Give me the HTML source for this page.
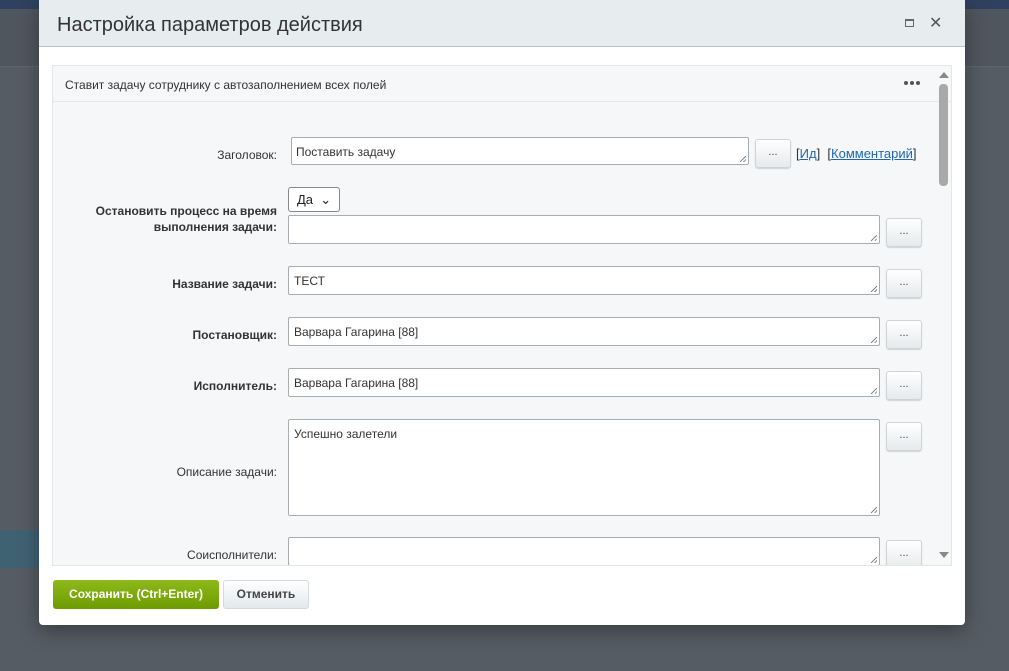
<!DOCTYPE html>
<html><head><meta charset="utf-8"><style>
*{box-sizing:border-box}
body{margin:0;width:1009px;height:671px;overflow:hidden;background:#565c64;font-family:"Liberation Sans","DejaVu Sans",sans-serif;position:relative}
.topbar{position:absolute;left:0;top:0;width:1009px;height:9px;background:#2f4160}
.sub{position:absolute;left:0;top:9px;width:1009px;height:58px;background:#50565e;border-bottom:1px solid #5f656c}
.teal{position:absolute;left:0;top:530px;width:40px;height:38px;background:#3f6273}
.dlg{position:absolute;left:39px;top:0;width:926px;height:625px;background:#fff;border-radius:0 0 4px 4px;box-shadow:0 6px 20px rgba(0,0,0,.35)}
.hd{height:47px;background:#e7ecef;border-bottom:1px solid #b9bfc4;position:relative}
.hd .t{position:absolute;left:18px;top:14px;font-size:20px;color:#333}
.hd .mx{position:absolute;left:866px;top:19px;width:9px;height:8px;border:1px solid #666;border-top-width:2px}
.hd .cl{position:absolute;left:890px;top:13px;font-size:16px;color:#555}
.pn{position:absolute;left:13px;top:65px;width:900px;height:501px;background:#f5f7f8;border:1px solid #e2e6e9;overflow:hidden}
.ph{height:36px;border-bottom:1px solid #e3e7ea;font-size:12px;color:#333;padding:12px 0 0 12px;position:relative}
.ph .dots{position:absolute;left:851px;top:15px;height:4px;line-height:0}
.ph .dots i{display:inline-block;width:4px;height:4px;border-radius:2px;background:#555;margin-right:2px;vertical-align:top}
.sb{position:absolute;left:886px;top:18px;width:9px;height:102px;background:#a9a9a9;border-radius:4px}
.ar{position:absolute;left:886px;width:0;height:0;border-left:5px solid transparent;border-right:5px solid transparent}
.lbl{position:absolute;right:674px;font-size:12px;color:#333;text-align:right;line-height:16px}
.b{font-weight:bold}
.ta{position:absolute;background:#fff;border:1px solid #a8adb2;border-radius:2px;font-size:12px;color:#333;padding:7px 5px}
.ta:after{content:"";position:absolute;right:2px;bottom:2px;width:6px;height:6px;background:linear-gradient(135deg,transparent 45%,#888 45%,#888 55%,transparent 55%,transparent 75%,#888 75%,#888 85%,transparent 85%)}
.btn{position:absolute;width:36px;height:29px;border:1px solid #d0d4d7;border-radius:3px;background:linear-gradient(#fff,#e6eaec);font-size:11px;text-align:center;line-height:25px;color:#444;box-shadow:0 1px 1px rgba(0,0,0,.15)}
.sel{position:absolute;left:235px;top:121px;width:52px;height:25px;border:1px solid #888;border-radius:3px;background:#fff;font-size:13px;padding:4px 0 0 8px;color:#222}
a{color:#2067b0}
.save{position:absolute;left:14px;top:580px;width:166px;height:29px;background:linear-gradient(#8fb81b,#6d9c00);border-radius:3px;color:#fff;font-weight:bold;font-size:12px;text-align:center;line-height:29px}
.cancel{position:absolute;left:184px;top:580px;width:86px;height:29px;background:linear-gradient(#fff,#e4e9ec);border:1px solid #d6dadd;border-radius:3px;color:#444;font-weight:bold;font-size:12px;text-align:center;line-height:27px}
</style></head><body>
<div class="topbar"></div><div class="sub"></div><div class="teal"></div>
<div class="dlg">
<div class="hd"><div class="t">Настройка параметров действия</div><div class="mx"></div><div class="cl">✕</div></div>
<div class="pn">
<div class="ph">Ставит задачу сотруднику с автозаполнением всех полей<span class="dots"><i></i><i></i><i></i></span></div>
<div class="ar" style="top:6px;border-bottom:6px solid #888"></div>
<div class="sb"></div>
<div class="ar" style="top:486px;border-top:6px solid #888"></div>

<div class="lbl" style="top:81px">Заголовок:</div>
<div class="ta" style="left:238px;top:71px;width:458px;height:28px;padding-left:4px">Поставить задачу</div>
<div class="btn" style="left:702px;top:73px">...</div>
<div style="position:absolute;left:743px;top:80px;font-size:13px;color:#333">[<a href="#">Ид</a>] &nbsp;[<a href="#">Комментарий</a>]</div>

<div class="sel">Да&nbsp; &#x2304;</div>
<div class="lbl b" style="top:137px">Остановить процесс на время<br>выполнения задачи:</div>
<div class="ta" style="left:235px;top:149px;width:592px;height:29px"></div>
<div class="btn" style="left:833px;top:152px">...</div>

<div class="lbl b" style="top:210px">Название задачи:</div>
<div class="ta" style="left:235px;top:200px;width:592px;height:29px">ТЕСТ</div>
<div class="btn" style="left:833px;top:203px">...</div>

<div class="lbl b" style="top:261px">Постановщик:</div>
<div class="ta" style="left:235px;top:251px;width:592px;height:29px">Варвара Гагарина [88]</div>
<div class="btn" style="left:833px;top:254px">...</div>

<div class="lbl b" style="top:312px">Исполнитель:</div>
<div class="ta" style="left:235px;top:302px;width:592px;height:29px">Варвара Гагарина [88]</div>
<div class="btn" style="left:833px;top:305px">...</div>

<div class="lbl" style="top:398px">Описание задачи:</div>
<div class="ta" style="left:235px;top:353px;width:592px;height:97px">Успешно залетели</div>
<div class="btn" style="left:833px;top:356px">...</div>

<div class="lbl" style="top:481px">Соисполнители:</div>
<div class="ta" style="left:235px;top:471px;width:592px;height:29px"></div>
<div class="btn" style="left:833px;top:474px">...</div>
</div>
<div class="save">Сохранить (Ctrl+Enter)</div>
<div class="cancel">Отменить</div>
</div>
</body></html>
